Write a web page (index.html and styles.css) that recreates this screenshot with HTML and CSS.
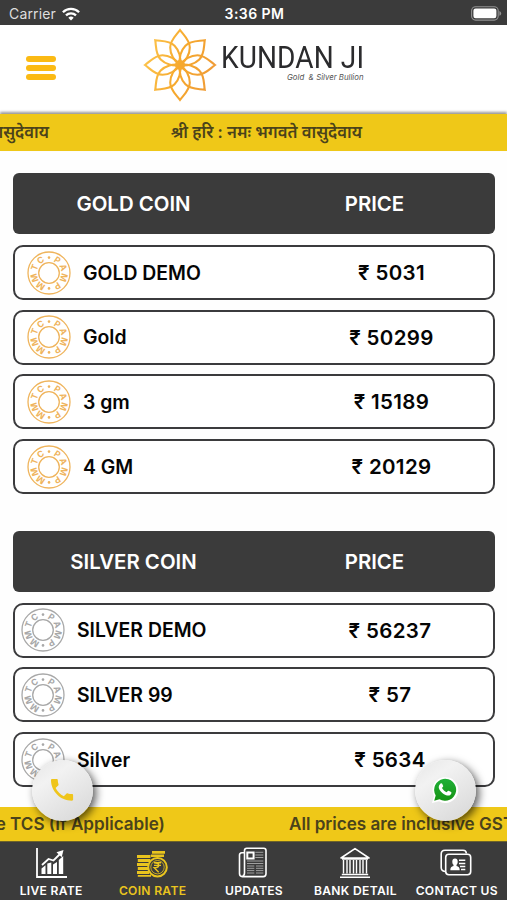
FILE: index.html
```html
<!DOCTYPE html>
<html lang="en">
<head>
<meta charset="utf-8">
<title>Kundan Ji</title>
<link rel="stylesheet" href="styles.css">
</head>
<body>
<svg class="defs" aria-hidden="true">
  <symbol id="coin" viewBox="0 0 44 44">
    <g fill="none" stroke="currentColor"><circle cx="22" cy="22" r="21" stroke-width="1.3"/><circle cx="22" cy="22" r="10.3" stroke-width="1.3"/></g>
    <g class="coin-text" fill="currentColor" text-anchor="middle">
      <circle cx="22" cy="6.6" r="1.3"/><circle cx="22" cy="37.4" r="1.3"/>
      <text x="22" y="9.8" transform="rotate(33 22 22)">P</text>
      <text x="22" y="9.8" transform="rotate(69 22 22)">A</text>
      <text x="22" y="9.8" transform="rotate(108 22 22)">M</text>
      <text x="22" y="9.8" transform="rotate(147 22 22)">P</text>
      <text x="22" y="9.8" transform="rotate(213 22 22)">M</text>
      <text x="22" y="9.8" transform="rotate(252 22 22)">M</text>
      <text x="22" y="9.8" transform="rotate(291 22 22)">T</text>
      <text x="22" y="9.8" transform="rotate(327 22 22)">C</text>
    </g>
  </symbol>
</svg>
<div class="app">
  <div class="status">
    <div class="carrier"><span>Carrier</span>
      <svg width="18" height="14" viewBox="0 0 18 14"><g fill="none" stroke="#fff" stroke-width="2.3"><path d="M.9 5.2a11.5 11.5 0 0 1 16.2 0"/><path d="M4 8.4a7.1 7.1 0 0 1 10 0"/></g><path d="M9 13.6 6.3 10.8a3.9 3.9 0 0 1 5.4 0z" fill="#fff"/></svg>
    </div>
    <div class="time">3:36 PM</div>
    <svg class="battery" width="31" height="15" viewBox="0 0 31 15"><rect x=".6" y=".7" width="26.6" height="13.4" rx="4" fill="none" stroke="#929292" stroke-width="1.1"/><rect x="2.4" y="2.5" width="23" height="9.8" rx="2.2" fill="#fff"/><path d="M28.4 5v4.8q1.8-.8 1.8-2.4T28.4 5" fill="#929292"/></svg>
  </div>
  <header class="header">
    <div class="menu"><i></i><i></i><i></i></div>
    <div class="brand">
      <svg class="flower" width="76" height="76" viewBox="-38 -38 76 76">
        <defs>
          <linearGradient id="sun" gradientUnits="userSpaceOnUse" x1="-36" y1="-10" x2="36" y2="10"><stop offset="0" stop-color="#fcc44c"/><stop offset=".5" stop-color="#f6a92d"/><stop offset="1" stop-color="#ef9a37"/></linearGradient>
          <mask id="petals" maskUnits="userSpaceOnUse" x="-38" y="-38" width="76" height="76">
            <g fill="none" stroke="#fff" stroke-width="2.1">
              <path id="petal" d="M0 0C-6-4-9.8-11-9.8-17.5C-9.8-25-4-29.5 0-35C4-29.5 9.8-25 9.8-17.5C9.8-11 6-4 0 0z"/>
              <use href="#petal" transform="rotate(45)"/><use href="#petal" transform="rotate(90)"/><use href="#petal" transform="rotate(135)"/><use href="#petal" transform="rotate(180)"/><use href="#petal" transform="rotate(225)"/><use href="#petal" transform="rotate(270)"/><use href="#petal" transform="rotate(315)"/>
            </g>
            <circle r="5" fill="#fff"/>
          </mask>
        </defs>
        <rect x="-38" y="-38" width="76" height="76" fill="url(#sun)" mask="url(#petals)"/>
      </svg>
      <div class="wordmark"><div class="name">KUNDAN JI</div><div class="tag">Gold &nbsp;&amp; Silver Bullion</div></div>
    </div>
  </header>
  <div class="ticker top"><span class="t1">वासुदेवाय</span><span class="t2">श्री हरि : नमः भगवते वासुदेवाय</span></div>

  <main>
    <section class="gold">
      <div class="head"><span>GOLD COIN</span><span>PRICE</span></div>
      <div class="row"><svg class="coin"><use href="#coin"/></svg><b>GOLD DEMO</b><strong>₹ 5031</strong></div>
      <div class="row"><svg class="coin"><use href="#coin"/></svg><b>Gold</b><strong>₹ 50299</strong></div>
      <div class="row"><svg class="coin"><use href="#coin"/></svg><b>3 gm</b><strong>₹ 15189</strong></div>
      <div class="row"><svg class="coin"><use href="#coin"/></svg><b>4 GM</b><strong>₹ 20129</strong></div>
    </section>
    <section class="silver">
      <div class="head"><span>SILVER COIN</span><span>PRICE</span></div>
      <div class="row"><svg class="coin"><use href="#coin"/></svg><b>SILVER DEMO</b><strong>₹ 56237</strong></div>
      <div class="row"><svg class="coin"><use href="#coin"/></svg><b>SILVER 99</b><strong>₹ 57</strong></div>
      <div class="row"><svg class="coin"><use href="#coin"/></svg><b>Silver</b><strong>₹ 5634</strong></div>
    </section>
  </main>

  <div class="ticker bottom"><span class="t1">All prices are inclusive TCS (If Applicable)</span><span class="t2">All prices are inclusive GST</span></div>
  <nav class="nav">
    <a><svg width="32" height="32" viewBox="0 0 32 32"><path d="M2 1v29h30" fill="none" stroke="#fff" stroke-width="1.8"/><g fill="#fff"><path d="M6.5 21.5l4-3.2V27h-4zM12.3 16.5l4-1V27h-4zM18 17.5l4-2.5v12h-4zM23.8 13l4.4-4v18h-4.4z"/></g><path d="M7 18l6.5-6 5 1.5 7-7" fill="none" stroke="#fff" stroke-width="1.8"/><path d="M28.5 3l-7 2.2 5.2 5z" fill="#fff"/></svg><span>LIVE RATE</span></a>
    <a class="active"><svg width="32" height="32" viewBox="0 0 32 32"><g fill="#e9c41e"><path d="M1 8h13.500v3H1zM1.800 12h12.500v3H1.800zM1 16h11.500v3H1zM1.800 20H12v3H1.800zM1 24h12v3H1zM1.800 28H15v1.800H1.800zM16 4h13v2.800H16zM15 7.500h13v2.400H15z"/></g><circle cx="21.5" cy="20.2" r="9.3" fill="#3b3b3b" stroke="#e9c41e" stroke-width="2"/><circle cx="21.5" cy="20.2" r="6.7" fill="none" stroke="#e9c41e" stroke-width=".8"/><path d="M18 15.8h7M18 18.4h7M18.2 15.8c6 0 6 5 0 5l4.5 4.5" fill="none" stroke="#e9c41e" stroke-width="1.4"/></svg><span>COIN RATE</span></a>
    <a><svg width="32" height="32" viewBox="0 0 32 32"><g fill="none" stroke="#fff" stroke-width="1.6"><path d="M7.500 25.800V3.500q0-2.300 2.300-2.300h16.900q2.300 0 2.300 2.300v23.300q0 2.800-2.800 2.800H5.200q-2.700 0-2.700-3V8q0-2 2.300-2.200h2.700v20q0 3-2 3"/><rect x="10.300" y="5.500" width="6.300" height="6" stroke-width="2"/></g><path d="M18.300 5.300h8M18.300 8h8M18.300 10.500h8M10 14h16.300M10 16.500h16.300M10 19h7.300M19 19h7.300M10 21.300h7.300M19 21.300h7.300M10 23.600h7.300M19 23.600h7.300M10 26h7.300M19 26h7.300" stroke="#aaa" stroke-width=".9"/></svg><span>UPDATES</span></a>
    <a><svg width="32" height="32" viewBox="0 0 32 32"><path d="M2 11L16 1.6 30 11zM3 12h26" fill="none" stroke="#fff" stroke-width="1.6" stroke-linejoin="round"/><path d="M4.5 13v13.5M8 13v13.5M11 13v13.5M14.5 13v13.5M17.5 13v13.5M21 13v13.5M24 13v13.5M27.5 13v13.5" stroke="#fff" stroke-width="1.4"/><path d="M2.8 27.4h26.4M1 30.2h30" stroke="#fff" stroke-width="1.5"/></svg><span>BANK DETAIL</span></a>
    <a><svg width="32" height="32" viewBox="0 0 32 32"><g fill="none" stroke="#fff" stroke-width="1.6"><rect x="5.7" y="7.2" width="25" height="20.5" rx="3.2"/><path d="M5 24.5Q1.2 24 1.2 20.5V7Q1.2 3.3 5 3.3h18q3.2 0 3.4 3.2"/></g><g fill="#fff"><ellipse cx="15" cy="14.8" rx="2.7" ry="3.3"/><path d="M10.3 23.2q0-3.8 3.2-4.2v-2h3v2q3.2.4 3.2 4.2z"/></g><path d="M19 13.2h6.3M19 16.4h6.3M20 19.4h5.3M21 22.4h4.3" stroke="#fff" stroke-width="1.5"/></svg><span>CONTACT US</span></a>
  </nav>
  <div class="fab call"><svg width="24" height="24" viewBox="0 0 24 24"><path fill="#efc51b" d="M2.2.9h4.400c.8 0 1.200.5 1.200 1.100 0 1.500.2 2.900.7 4.200.2.5.1 1-.3 1.400L5.600 10.100c1.800 3.500 4.700 6.400 8.200 8.200l2.600-2.600c.4-.4.9-.5 1.400-.3 1.300.5 2.700.7 4.200.7.7 0 1.100.5 1.100 1.200v4.300c0 .7-.5 1.200-1.100 1.200C10.400 22.800 1 13.400 1 2.100c0-.7.5-1.200 1.200-1.200z"/></svg></div>
  <div class="fab wa"><svg width="30" height="30" viewBox="0 0 30 30"><defs><linearGradient id="wg" x1="0" y1="0" x2="0" y2="1"><stop offset="0" stop-color="#20b038"/><stop offset="1" stop-color="#159313"/></linearGradient></defs><path d="M2 28l1.900-7A12.900 12.900 0 1 1 9 26.300z" fill="#fff"/><path d="M4.200 25.700l1.500-5.200A11 11 0 1 1 9.500 24.300z" fill="url(#wg)"/><path d="M10.600 8.400c.5-.4 1.300-.3 1.600.3l1 2.400c.2.600-.9 1.600-1.200 2 1 1.900 2.600 3.400 4.700 4.200.5-.5 1.300-1.700 1.900-1.500l2.500 1.300c.9.500-.1 2.400-.8 2.900-1.600 1.200-4.200.5-6.300-.7-2.300-1.400-4.400-3.700-5.100-6-.6-1.900.5-4 1.700-4.900z" fill="#fff"/></svg></div>
</div>
</body>
</html>
```

FILE: styles.css
```css
* { box-sizing: border-box; }
body { margin: 0; background: #fff; font-family: Inter, "Noto Sans", sans-serif; }
.defs { position: absolute; width: 0; height: 0; }
.app { position: relative; width: 507px; height: 900px; overflow: hidden; display: flex; flex-direction: column; background: #fefefe; }

.status { height: 25px; flex: none; background: #3b3b3b; color: #fff; display: grid; grid-template-columns: 1fr auto 1fr; align-items: center; padding: 2px 7px 0 9px; }
.carrier { display: flex; align-items: center; gap: 6px; font-size: 14px; letter-spacing: .15px; color: #dedede; }
.time { font-size: 14px; font-weight: 600; letter-spacing: .45px; }
.battery { justify-self: end; margin-right: -2px; }

.header { height: 86px; flex: none; display: flex; background: #fff; }
.menu { width: 30px; margin: 31px 0 0 26px; display: flex; flex-direction: column; gap: 3px; }
.menu i { height: 6px; border-radius: 3px; background: #fbba14; }
.brand { display: flex; margin-left: 86px; }
.flower { margin-top: 1.5px; }
.wordmark { width: 142.500px; margin-left: 3px; padding-top: 16px; color: #2b2b2d; }
.name { font-family: Roboto, sans-serif; font-size: 30.500px; line-height: 34px; letter-spacing: .1px; white-space: nowrap; transform: scaleX(.92); transform-origin: 0 50%; }
.tag { font-size: 7.800px; line-height: 10px; margin-top: -3.500px; font-style: italic; text-align: right; color: #555; white-space: nowrap; }

.ticker { position: relative; flex: none; overflow: hidden; display: flex; justify-content: space-between; white-space: nowrap; background: #efc818; color: #4b431b; font-weight: 600; }
.top { height: 37px; margin-top: 3px; line-height: 37px; font-size: 16.700px; padding-right: 145px; box-shadow: 0 -2px 2.500px rgba(0,0,0,.4); }
.top .t1 { width: 49px; display: flex; justify-content: flex-end; }

main { padding: 22px 12px 0 13px; height: 656px; flex: none; }
.head { height: 61px; border-radius: 6px; background: #3b3b3b; color: #fff; font-size: 20.400px; font-weight: 600; display: grid; grid-template-columns: 1fr 1fr; align-items: center; text-align: center; margin-bottom: 11px; }
.row { height: 55px; border: 2.500px solid #3b3b3d; border-radius: 10px; margin-bottom: 9.700px; background: #fff; display: grid; grid-template-columns: 44px 218px 1fr; align-items: center; font-size: 19.400px; color: #050505; padding: 0 0 0 12px; }
.row b, .row strong { font-weight: 600; white-space: nowrap; }
.row b { padding-left: 12px; }
.row strong { font-size: 20.500px; letter-spacing: .35px; text-align: center; padding-left: 1px; }
.coin { width: 44px; height: 44px; color: #efb45c; }
.coin-text { font: 700 8.800px Inter, sans-serif; }
.silver { margin-top: 36.700px; }
.silver .coin { color: #a8a8a8; }
.silver .row { padding-left: 6px; }
.silver .row strong { padding-left: 4px; }

.bottom { height: 34px; line-height: 34px; font-size: 17.100px; }
.bottom .t1 { width: 165px; display: flex; justify-content: flex-end; }
.bottom .t2 { width: 218px; }

.nav { height: 60px; flex: none; background: #3b3b3b; border-top: 1px solid #6d632a; display: grid; grid-template-columns: repeat(5, 1fr); color: #fff; }
.nav a { display: flex; flex-direction: column; align-items: center; padding-top: 5px; }
.nav span { font-size: 12.100px; font-weight: 600; line-height: 16px; letter-spacing: .3px; margin: 4px 0 0 1px; white-space: nowrap; }
.nav .active { color: #e9c41e; }

.fab { position: absolute; top: 760px; width: 61px; height: 61px; padding: 0 2px 2px 0; border-radius: 50%; display: flex; align-items: center; justify-content: center; background: linear-gradient(145deg, #e6e6e6, #f2f2f2 30%, #d6d6d6); box-shadow: 3px 3px 8px rgba(0,0,0,.65); }
.call { left: 32px; }
.wa { left: 415px; }
```
